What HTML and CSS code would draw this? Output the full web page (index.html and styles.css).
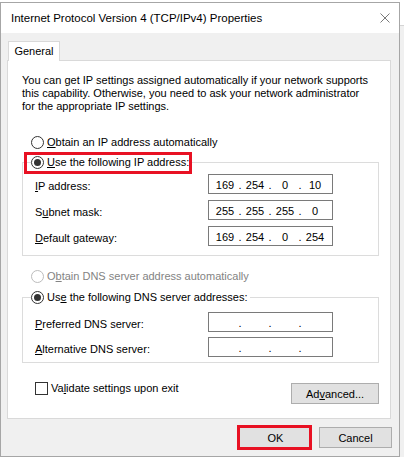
FILE: index.html
```html
<!DOCTYPE html>
<html>
<head>
<meta charset="utf-8">
<title>Internet Protocol Version 4 (TCP/IPv4) Properties</title>
<link rel="stylesheet" href="styles.css">
</head>
<body>
<div class="window">
  <div class="titlebar">
    <span class="title">Internet Protocol Version 4 (TCP/IPv4) Properties</span>
    <svg class="close" width="10" height="10" viewBox="0 0 10 10"><path d="M0.5 0.5 L9.5 9.5 M9.5 0.5 L0.5 9.5" stroke="#7a7a7a" stroke-width="1" fill="none"/></svg>
  </div>
  <div class="client">
    <div class="tab">General</div>
    <div class="panel">
      <p class="desc">You can get IP settings assigned automatically if your network supports<br>this capability. Otherwise, you need to ask your network administrator<br>for the appropriate IP settings.</p>

      <div class="option first">
        <span class="radio"></span><span class="opt-text"><u>O</u>btain an IP address automatically</span>
      </div>

      <div class="group ip-group">
        <div class="legend highlight">
          <span class="radio checked"></span><span class="opt-text"><u>U</u>se the following IP address:</span>
        </div>
        <div class="row">
          <span class="label"><u>I</u>P address:</span>
          <div class="ipbox"><span class="oct">169</span><span class="dot">.</span><span class="oct">254</span><span class="dot">.</span><span class="oct">0</span><span class="dot">.</span><span class="oct">10</span></div>
        </div>
        <div class="row">
          <span class="label">S<u>u</u>bnet mask:</span>
          <div class="ipbox"><span class="oct">255</span><span class="dot">.</span><span class="oct">255</span><span class="dot">.</span><span class="oct">255</span><span class="dot">.</span><span class="oct">0</span></div>
        </div>
        <div class="row">
          <span class="label"><u>D</u>efault gateway:</span>
          <div class="ipbox"><span class="oct">169</span><span class="dot">.</span><span class="oct">254</span><span class="dot">.</span><span class="oct">0</span><span class="dot">.</span><span class="oct">254</span></div>
        </div>
      </div>

      <div class="option disabled">
        <span class="radio"></span><span class="opt-text">O<u>b</u>tain DNS server address automatically</span>
      </div>

      <div class="group dns-group">
        <div class="legend">
          <span class="radio checked"></span><span class="opt-text">Us<u>e</u> the following DNS server addresses:</span>
        </div>
        <div class="row">
          <span class="label"><u>P</u>referred DNS server:</span>
          <div class="ipbox"><span class="oct"></span><span class="dot">.</span><span class="oct"></span><span class="dot">.</span><span class="oct"></span><span class="dot">.</span><span class="oct"></span></div>
        </div>
        <div class="row">
          <span class="label"><u>A</u>lternative DNS server:</span>
          <div class="ipbox"><span class="oct"></span><span class="dot">.</span><span class="oct"></span><span class="dot">.</span><span class="oct"></span><span class="dot">.</span><span class="oct"></span></div>
        </div>
      </div>

      <div class="bottom">
        <div class="check-row"><span class="checkbox"></span><span class="opt-text">Va<u>l</u>idate settings upon exit</span></div>
        <div class="btn adv">Ad<u>v</u>anced...</div>
      </div>
    </div>
    <div class="buttons">
      <div class="btn ok">OK</div>
      <div class="btn">Cancel</div>
    </div>
  </div>
</div>
</body>
</html>
```

FILE: styles.css
```css
html, body {
  margin: 0;
  padding: 0;
}
body {
  background: linear-gradient(to bottom, #ffffff 0 25px, #d4d4d4 25px 26px, #f0f0f0 26px 457px, #ffffff 457px);
  font-family: "Liberation Sans", Arial, sans-serif;
  font-size: 11px;
  color: #000;
  width: 404px;
  height: 461px;
  overflow: hidden;
}
.window {
  margin-top: 2px;
  width: 400px;
  height: 455px;
  box-sizing: border-box;
  border: 1px solid #a6a6a6;
  background: #f0f0f0;
  display: flex;
  flex-direction: column;
}
.titlebar {
  height: 30px;
  flex: 0 0 30px;
  background: #fff;
  display: flex;
  align-items: center;
  justify-content: space-between;
  padding: 0 9px 1px 10px;
  box-sizing: border-box;
}
.title {
  font-size: 11.5px;
}
.close {
  display: block;
}
.client {
  flex: 1;
  padding: 8px 7px 8px 6px;
  display: flex;
  flex-direction: column;
}
.tab {
  margin-left: 1px;
  width: 52px;
  height: 20px;
  box-sizing: border-box;
  border: 1px solid #d9d9d9;
  border-bottom: none;
  background: #fff;
  margin-bottom: -1px;
  position: relative;
  z-index: 1;
  display: flex;
  align-items: center;
  justify-content: center;
  padding-bottom: 1px;
}
.panel {
  height: 359px;
  box-sizing: border-box;
  margin-right: 1px;
  border: 1px solid #d9d9d9;
  background: #fff;
  padding: 13px 0 0 14px;
  display: flex;
  flex-direction: column;
  align-items: flex-start;
}
.desc {
  margin: 0;
  line-height: 13px;
}
.option {
  display: flex;
  align-items: center;
  height: 13px;
  margin-left: 9px;
}
.option.first {
  margin-top: 23px;
}
.option.disabled {
  margin-top: 14px;
  color: #838383;
}
.radio {
  width: 13px;
  height: 13px;
  box-sizing: border-box;
  border: 1px solid #333;
  border-radius: 50%;
  background: #fff;
  flex: 0 0 13px;
  display: flex;
  align-items: center;
  justify-content: center;
}
.radio.checked::before {
  content: "";
  width: 7px;
  height: 7px;
  border-radius: 50%;
  background: #333;
}
.option.disabled .radio {
  border-color: #bcbcbc;
}
.opt-text {
  margin-left: 3px;
  line-height: 13px;
  white-space: nowrap;
}
.group {
  width: 357px;
  box-sizing: border-box;
  border: 1px solid #dcdcdc;
  padding: 0 0 9px 12px;
  display: flex;
  flex-direction: column;
  align-items: flex-start;
}
.ip-group {
  margin-top: 13px;
}
.dns-group {
  margin-top: 14px;
  padding-bottom: 5px;
}
.legend {
  display: flex;
  align-items: center;
  height: 13px;
  margin-top: -7px;
  margin-left: -4px;
  padding-right: 2px;
  background: #fff;
  position: relative;
}
.legend.highlight::after {
  content: "";
  position: absolute;
  left: -7px;
  top: -4px;
  width: 168px;
  height: 22px;
  box-sizing: border-box;
  border: 3px solid #e81123;
}
.row {
  display: flex;
  align-items: center;
  height: 20px;
  margin-top: 6px;
}
.ip-group .legend + .row {
  margin-top: 5px;
}
.dns-group .legend + .row {
  margin-top: 8px;
}
.dns-group .row {
  margin-top: 5px;
}
.label {
  width: 173px;
  padding-top: 3px;
  white-space: nowrap;
}
.ipbox {
  width: 125px;
  height: 20px;
  box-sizing: border-box;
  border: 1px solid #7a7a7a;
  background: #fff;
  display: flex;
  align-items: center;
  padding-left: 4px;
  padding-top: 1px;
}
.oct {
  width: 24px;
  text-align: center;
}
.dot {
  width: 6px;
  text-align: center;
}
.bottom {
  width: 357px;
  margin-top: 19px;
  display: flex;
  justify-content: space-between;
  align-items: flex-start;
}
.check-row {
  display: flex;
  align-items: center;
  height: 13px;
  margin-left: 13px;
}
.checkbox {
  width: 13px;
  height: 13px;
  box-sizing: border-box;
  border: 1px solid #333;
  background: #fff;
}
.btn {
  width: 73px;
  height: 21px;
  box-sizing: border-box;
  border: 1px solid #adadad;
  background: #e1e1e1;
  display: flex;
  align-items: center;
  justify-content: center;
  position: relative;
}
.btn.adv {
  width: 88px;
  margin-top: 1px;
}
.buttons {
  margin-top: 8px;
  display: flex;
  justify-content: flex-end;
  gap: 7px;
}
.btn.ok {
  border-color: #0078d7;
}
.btn.ok::after {
  content: "";
  position: absolute;
  left: -3px;
  top: -3px;
  right: -1px;
  bottom: -3px;
  border: 3px solid #e81123;
}
```
